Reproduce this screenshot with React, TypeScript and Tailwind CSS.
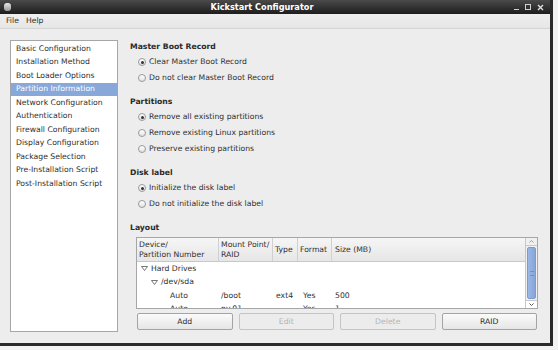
import React from "react";

const font = { fontFamily: '"DejaVu Sans", "Liberation Sans", sans-serif' };

function Radio({ checked, label }: { checked?: boolean; label: string }) {
  return (
    <div className="flex h-[16px] items-center pl-[8px]">
      <span className="flex h-[8px] w-[8px] items-center justify-center rounded-full border border-[#9a9a9a] bg-gradient-to-b from-[#ffffff] to-[#e2e2e2]">
        {checked && <span className="h-[3px] w-[3px] rounded-full bg-[#333]" />}
      </span>
      <span className="ml-[3px] text-[7.7px] text-[#2e2e2e]">{label}</span>
    </div>
  );
}

function Heading({ children }: { children: React.ReactNode }) {
  return <div className="flex h-[14px] items-center text-[7.7px] font-bold text-[#2a2a2a]">{children}</div>;
}

function Tri() {
  return (
    <svg width="7" height="5" viewBox="0 0 7 5" className="mr-[3px]">
      <path d="M0.5 0.5 L6.5 0.5 L3.5 4.5 Z" fill="none" stroke="#555" strokeWidth="0.8" />
    </svg>
  );
}

const items = [
  "Basic Configuration",
  "Installation Method",
  "Boot Loader Options",
  "Partition Information",
  "Network Configuration",
  "Authentication",
  "Firewall Configuration",
  "Display Configuration",
  "Package Selection",
  "Pre-Installation Script",
  "Post-Installation Script",
];

function Btn({ label, disabled }: { label: string; disabled?: boolean }) {
  return (
    <div
      className={`flex h-[17px] items-center justify-center rounded-[2px] border text-[7.7px] ${
        disabled
          ? "border-[#c4c4c4] bg-[#ececec] text-[#b4b4b4]"
          : "border-[#a4a4a4] bg-gradient-to-b from-[#fbfbfb] to-[#e6e6e6] text-[#2e2e2e]"
      }`}
    >
      {label}
    </div>
  );
}

export default function App() {
  return (
    <div className="h-[350px] w-[558px] overflow-hidden bg-[#f3f3f3]" style={font}>
      <div className="flex h-[346px] w-[553px] flex-col border-b-[3px] border-r-[3px] border-[#2b2b2b] bg-[#ededed]">
        {/* title bar */}
        <div className="flex h-[14px] items-center bg-gradient-to-b from-[#4a4a4a] to-[#1e1e1e] px-[4px]">
          <div className="flex w-[40px] items-center">
            <span className="h-[8px] w-[7px] rounded-[3px] bg-gradient-to-b from-[#e8e8e8] to-[#9a9a9a]" />
          </div>
          <div className="flex-1 text-center text-[8.2px] font-bold text-white">Kickstart Configurator</div>
          <div className="flex w-[66px] items-center justify-end gap-[6px] pr-[2px] text-[#d8d8d8]">
            <span className="mt-[5px] h-[1px] w-[5px] bg-[#d0d0d0]" />
            <span className="h-[6px] w-[6px] border border-[#d0d0d0]" />
            <svg width="7" height="7" viewBox="0 0 7 7">
              <path d="M1 1 L6 6 M6 1 L1 6" stroke="#e0e0e0" strokeWidth="1.4" />
            </svg>
          </div>
        </div>
        {/* menu bar */}
        <div className="flex h-[15px] items-center gap-[7px] border-b border-[#d4d4d4] bg-gradient-to-b from-[#efefef] to-[#e6e6e6] pl-[6px] text-[7.7px] text-[#2e2e2e]">
          <span>File</span>
          <span>Help</span>
        </div>
        {/* content */}
        <div className="flex flex-1 pl-[10px] pt-[11px] pb-[8px]">
          <div className="h-[292px] w-[108px] border border-[#a6a6a6] bg-white pt-[1px]">
            {items.map((it, i) => (
              <div
                key={it}
                className={`flex h-[13.5px] items-center pl-[5px] text-[7.7px] ${
                  i === 3 ? "bg-[#88a8da] text-white" : "text-[#2e2e2e]"
                }`}
              >
                {it}
              </div>
            ))}
          </div>
          <div className="ml-[12px] flex flex-1 flex-col">
            <div>
              <Heading>Master Boot Record</Heading>
              <Radio checked label="Clear Master Boot Record" />
              <Radio label="Do not clear Master Boot Record" />
            </div>
            <div className="mt-[9px]">
              <Heading>Partitions</Heading>
              <Radio checked label="Remove all existing partitions" />
              <Radio label="Remove existing Linux partitions" />
              <Radio label="Preserve existing partitions" />
            </div>
            <div className="mt-[9px]">
              <Heading>Disk label</Heading>
              <Radio checked label="Initialize the disk label" />
              <Radio label="Do not initialize the disk label" />
            </div>
            <div className="mt-[9px]">
              <Heading>Layout</Heading>
            </div>
            {/* table */}
            <div className="ml-[6px] mr-[12px] mt-[2px] flex h-[72px] border border-[#a6a6a6] bg-white">
              <div className="flex-1 overflow-hidden text-[7.7px] text-[#2e2e2e]">
                <div className="flex h-[24px] border-b border-[#c8c8c8] bg-gradient-to-b from-[#f6f6f6] to-[#e6e6e6] leading-[10px]">
                  <div className="flex w-[82px] flex-col justify-center border-r border-[#d0d0d0] pl-[2px]">
                    <span>Device/</span>
                    <span>Partition Number</span>
                  </div>
                  <div className="flex w-[54px] flex-col justify-center border-r border-[#d0d0d0] pl-[2px]">
                    <span>Mount Point/</span>
                    <span>RAID</span>
                  </div>
                  <div className="flex w-[25px] items-center border-r border-[#d0d0d0] pl-[2px]">Type</div>
                  <div className="flex w-[34px] items-center border-r border-[#d0d0d0] pl-[2px]">Format</div>
                  <div className="flex flex-1 items-center pl-[3px]">Size (MB)</div>
                </div>
                <div className="flex h-[13.5px] items-center pl-[4px]">
                  <Tri />
                  Hard Drives
                </div>
                <div className="flex h-[13.5px] items-center pl-[14px]">
                  <Tri />
                  /dev/sda
                </div>
                <div className="flex h-[13.5px] items-center">
                  <div className="w-[82px] pl-[33px]">Auto</div>
                  <div className="w-[54px] pl-[2px]">/boot</div>
                  <div className="w-[25px] pl-[3px]">ext4</div>
                  <div className="w-[34px] pl-[5px]">Yes</div>
                  <div className="pl-[3px]">500</div>
                </div>
                <div className="flex h-[13.5px] items-center">
                  <div className="w-[82px] pl-[33px]">Auto</div>
                  <div className="w-[54px] pl-[2px]">pv.01</div>
                  <div className="w-[25px] pl-[3px]"></div>
                  <div className="w-[34px] pl-[5px]">Yes</div>
                  <div className="pl-[3px]">1</div>
                </div>
              </div>
              {/* scrollbar */}
              <div className="flex w-[12px] flex-col border-l border-[#c8c8c8] bg-[#f0f0f0]">
                <div className="flex h-[8px] items-center justify-center border-b border-[#c8c8c8]">
                  <svg width="5" height="3" viewBox="0 0 5 3">
                    <path d="M0.5 2.5 L2.5 0.5 L4.5 2.5" fill="none" stroke="#888" strokeWidth="0.8" />
                  </svg>
                </div>
                <div className="mx-[1px] my-[1px] flex flex-1 items-center justify-center rounded-[2px] border border-[#7b9bd0] bg-gradient-to-r from-[#9ab8e6] to-[#86a6d8]">
                  <span className="h-[5px] w-[4px] border-y border-[#6f8fc4]" />
                </div>
                <div className="flex h-[8px] items-center justify-center border-t border-[#c8c8c8] bg-white">
                  <svg width="5" height="3" viewBox="0 0 5 3">
                    <path d="M0.5 0.5 L2.5 2.5 L4.5 0.5" fill="none" stroke="#444" strokeWidth="0.9" />
                  </svg>
                </div>
              </div>
            </div>
            <div className="ml-[7px] mr-[13px] mt-[4px] grid grid-cols-4 gap-[6px]">
              <Btn label="Add" />
              <Btn label="Edit" disabled />
              <Btn label="Delete" disabled />
              <Btn label="RAID" />
            </div>
          </div>
        </div>
      </div>
    </div>
  );
}
